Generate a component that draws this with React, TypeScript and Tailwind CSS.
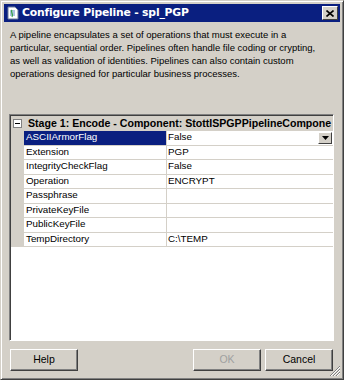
import React from "react";

const ROWS = [
  { name: "ASCIIArmorFlag", value: "False", selected: true },
  { name: "Extension", value: "PGP" },
  { name: "IntegrityCheckFlag", value: "False" },
  { name: "Operation", value: "ENCRYPT" },
  { name: "Passphrase", value: "" },
  { name: "PrivateKeyFile", value: "" },
  { name: "PublicKeyFile", value: "" },
  { name: "TempDirectory", value: "C:\\TEMP" },
];

const DESC = [
  "A pipeline encapsulates a set of operations that must execute in a",
  "particular, sequential order. Pipelines often handle file coding or crypting,",
  "as well as validation of identities. Pipelines can also contain custom",
  "operations designed for particular business processes.",
];

function WinButton({ label, disabled, className }: { label: string; disabled?: boolean; className?: string }) {
  return (
    <div
      className={`h-[22px] w-[68px] border border-t-white border-l-white border-r-[#404040] border-b-[#404040] bg-[#d4d0c8] shadow-[inset_-1px_-1px_0_#808080] flex items-center justify-center text-[10.5px] ${
        disabled ? "text-[#a0a0a0]" : "text-black"
      } ${className ?? ""}`}
    >
      {label}
    </div>
  );
}

export default function App() {
  return (
    <div className="relative w-[344px] h-[380px] bg-[#d4d0c8] font-['Liberation_Sans',Arial,sans-serif] border border-t-[#d4d0c8] border-l-[#d4d0c8] border-r-[#404040] border-b-[#404040] shadow-[inset_1px_1px_0_#ffffff,inset_-1px_-1px_0_#808080] p-[3px] flex flex-col">
      {/* title bar */}
      <div className="h-[18px] bg-[#0a1f80] flex items-center pl-[2px] pr-[2px]">
        <svg width="14" height="14" viewBox="0 0 14 14" className="shrink-0">
          <path d="M2 1h7l3 3v9H2z" fill="#ffffff" stroke="#6a7a9a" strokeWidth="1" />
          <path d="M4 5h5M4 7h5M4 9h5" stroke="#5a8ac0" strokeWidth="1" />
          <path d="M6 4c-2 2 2 4 0 7" stroke="#30a040" strokeWidth="1.2" fill="none" />
        </svg>
        <span className="ml-[2px] text-white font-bold text-[10.8px] font-['DejaVu_Sans',sans-serif] tracking-[-0.2px] leading-none">
          Configure Pipeline - spl_PGP
        </span>
        <div className="ml-auto h-[14px] w-[16px] bg-[#d4d0c8] border border-t-white border-l-white border-r-[#404040] border-b-[#404040] flex items-center justify-center">
          <svg width="8" height="7" viewBox="0 0 8 7">
            <path d="M0.5 0.5l7 6M7.5 0.5l-7 6" stroke="#000" strokeWidth="1.6" />
          </svg>
        </div>
      </div>

      {/* description */}
      <div className="mt-[6px] ml-[6px] text-[9.5px] leading-[13px] text-black whitespace-nowrap">
        {DESC.map((l) => (
          <div key={l}>{l}</div>
        ))}
      </div>

      {/* property grid */}
      <div className="mt-[34px] ml-[5px] mr-[6px] h-[227px] bg-white border border-t-[#808080] border-l-[#808080] border-r-white border-b-white shadow-[inset_1px_1px_0_#404040] pt-[1px] pl-[1px] flex flex-col overflow-hidden">
        <div className="h-[15px] bg-[#d4d0c8] flex items-center shrink-0">
          <div className="w-[13px] flex justify-center">
            <svg width="9" height="9" viewBox="0 0 9 9">
              <rect x="0.5" y="0.5" width="8" height="8" fill="#fff" stroke="#808080" />
              <path d="M2 4.5h5" stroke="#000" />
            </svg>
          </div>
          <span className="ml-[4px] font-bold text-[10.6px] whitespace-nowrap text-black">
            Stage 1: Encode - Component: StottISPGPPipelineCompone
          </span>
        </div>
        {ROWS.map((r) => (
          <div key={r.name} className="h-[14.5px] flex shrink-0">
            <div className="w-[13px] bg-[#d4d0c8]" />
            <div
              className={`w-[143px] border-b border-r border-[#d4d0c8] pl-[2px] flex items-center text-[9.8px] whitespace-nowrap ${
                r.selected ? "bg-[#0a1f80] text-white" : "text-black"
              }`}
            >
              {r.name}
            </div>
            <div className="flex-1 border-b border-[#d4d0c8] pl-[1px] flex items-center text-[9.8px] text-black relative">
              {r.value}
              {r.selected && (
                <div className="absolute right-[1px] top-[1px] h-[12px] w-[14px] bg-[#d4d0c8] border border-t-white border-l-white border-r-[#404040] border-b-[#404040] flex items-center justify-center">
                  <svg width="7" height="4" viewBox="0 0 7 4">
                    <path d="M0 0h7L3.5 4z" fill="#000" />
                  </svg>
                </div>
              )}
            </div>
          </div>
        ))}
      </div>

      {/* buttons */}
      <div className="mt-[8px] ml-[6px] mr-[7px] flex">
        <WinButton label="Help" />
        <WinButton label="OK" disabled className="ml-auto" />
        <WinButton label="Cancel" className="ml-[4px]" />
      </div>

      {/* size grip */}
      <svg width="12" height="12" viewBox="0 0 12 12" className="absolute right-[2px] bottom-[2px]">
        <path d="M11 1L1 11M11 4L4 11M11 7L7 11" stroke="#808080" strokeWidth="1" />
        <path d="M11 2L2 11M11 5L5 11M11 8L8 11" stroke="#ffffff" strokeWidth="1" />
      </svg>
    </div>
  );
}
